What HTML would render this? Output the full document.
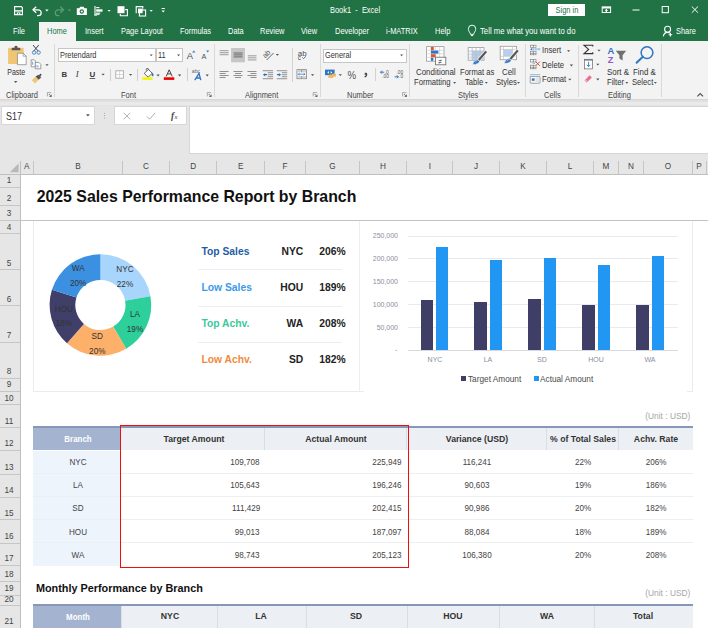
<!DOCTYPE html><html><head><meta charset="utf-8"><style>
html,body{margin:0;padding:0;width:708px;height:628px;overflow:hidden;background:#fff}
body{position:relative;font-family:"Liberation Sans",sans-serif}
.t{position:absolute;white-space:nowrap}
.r{position:absolute}
svg{position:absolute}
</style></head><body>
<div class="r" style="left:0px;top:0px;width:708px;height:41px;background:#217346;"></div>
<div class="r" style="left:39px;top:22px;width:37px;height:19px;background:#f3f3f3;"></div>
<div class="t" style="left:12.60px;top:28.15px;font-size:8.2px;line-height:8.2px;color:#fff;font-weight:normal;transform:scaleX(0.91);transform-origin:0 0;">File</div>
<div class="t" style="left:46.70px;top:28.15px;font-size:8.2px;line-height:8.2px;color:#217346;font-weight:normal;transform:scaleX(0.91);transform-origin:0 0;">Home</div>
<div class="t" style="left:84.80px;top:28.15px;font-size:8.2px;line-height:8.2px;color:#fff;font-weight:normal;transform:scaleX(0.91);transform-origin:0 0;">Insert</div>
<div class="t" style="left:120.80px;top:28.15px;font-size:8.2px;line-height:8.2px;color:#fff;font-weight:normal;transform:scaleX(0.91);transform-origin:0 0;">Page Layout</div>
<div class="t" style="left:179.50px;top:28.15px;font-size:8.2px;line-height:8.2px;color:#fff;font-weight:normal;transform:scaleX(0.91);transform-origin:0 0;">Formulas</div>
<div class="t" style="left:227.60px;top:28.15px;font-size:8.2px;line-height:8.2px;color:#fff;font-weight:normal;transform:scaleX(0.91);transform-origin:0 0;">Data</div>
<div class="t" style="left:260.20px;top:28.15px;font-size:8.2px;line-height:8.2px;color:#fff;font-weight:normal;transform:scaleX(0.91);transform-origin:0 0;">Review</div>
<div class="t" style="left:300.80px;top:28.15px;font-size:8.2px;line-height:8.2px;color:#fff;font-weight:normal;transform:scaleX(0.91);transform-origin:0 0;">View</div>
<div class="t" style="left:334.70px;top:28.15px;font-size:8.2px;line-height:8.2px;color:#fff;font-weight:normal;transform:scaleX(0.91);transform-origin:0 0;">Developer</div>
<div class="t" style="left:385.60px;top:28.15px;font-size:8.2px;line-height:8.2px;color:#fff;font-weight:normal;transform:scaleX(0.91);transform-origin:0 0;">i-MATRIX</div>
<div class="t" style="left:434.60px;top:28.15px;font-size:8.2px;line-height:8.2px;color:#fff;font-weight:normal;transform:scaleX(0.91);transform-origin:0 0;">Help</div>
<div class="t" style="left:479.70px;top:28.15px;font-size:8.2px;line-height:8.2px;color:#fff;font-weight:normal;transform:scaleX(0.945);transform-origin:0 0;">Tell me what you want to do</div>
<div class="t" style="left:675.60px;top:28.35px;font-size:8.2px;line-height:8.2px;color:#fff;font-weight:normal;transform:scaleX(0.91);transform-origin:0 0;">Share</div>
<div class="t" style="left:329.70px;top:7.35px;font-size:8.2px;line-height:8.2px;color:#fff;font-weight:normal;transform:scaleX(0.91);transform-origin:0 0;">Book1&nbsp; -&nbsp; Excel</div>
<div class="r" style="left:548px;top:4px;width:37px;height:12px;background:#fff;"></div>
<div class="t" style="left:566.50px;top:6.95px;font-size:8.2px;line-height:8.2px;color:#217346;font-weight:normal;transform:translateX(-50%) scaleX(0.91);transform-origin:50% 0;">Sign in</div>
<svg style="left:0;top:0" width="708" height="41"><path d="M14.6,6.6 H21.3 L22.4,7.7 V14.6 H14.6 Z" fill="none" stroke="#fff" stroke-width="1.2"/><rect x="14.6" y="10.2" width="7.8" height="1.4" fill="#fff"/><rect x="16.8" y="12.4" width="3.6" height="2.4" fill="#fff"/><rect x="18" y="13.2" width="1.2" height="1" fill="#217346"/><path d="M33.2,9.8 H38.2 A3,2.9 0 0 1 38.2,15.6 H37" fill="none" stroke="#fff" stroke-width="1.3"/><path d="M36.2,6.8 L33,9.8 L36.2,12.8" fill="none" stroke="#fff" stroke-width="1.3"/><path d="M45.2,9.6 H48.6 L46.9,11.5 Z" fill="#fff"/><path d="M63.3,9.8 H58.3 A3,2.9 0 0 0 58.3,15.6 H59.5" fill="none" stroke="#5d9c78" stroke-width="1.3"/><path d="M60.3,6.8 L63.5,9.8 L60.3,12.8" fill="none" stroke="#5d9c78" stroke-width="1.3"/><path d="M67.8,9.6 H71 L69.4,11.4 Z" fill="#5d9c78"/><path d="M76.8,8.3 H79.2 L80.2,6.8 H83.5 L84.5,8.3 H86.9 V14.9 H76.8 Z" fill="#fff"/><circle cx="81.8" cy="11.5" r="2.2" fill="#217346"/><circle cx="81.8" cy="11.5" r="1.1" fill="#fff"/><path d="M95,6 V16" stroke="#fff" stroke-width="1.1"/><rect x="96.2" y="7" width="3.2" height="1.2" fill="#fff"/><rect x="96.2" y="9.3" width="6.3" height="2.4" fill="#fff"/><rect x="96.2" y="12.6" width="4" height="1.2" fill="#fff"/><path d="M95.5,14.6 H99.5 M96.6,13.4 L95.4,14.6 L96.6,15.8" stroke="#fff" stroke-width="0.9" fill="none"/><path d="M107.5,10.1 H110.7 L109.1,11.7 Z" fill="#fff"/><rect x="117.5" y="6.2" width="7" height="7" fill="#fff"/><path d="M125.2,9.6 H127.4 V15.8 H120.3 V13.8" fill="none" stroke="#fff" stroke-width="1.1"/><path d="M136.2,13.3 V6.6 H142.8 V8.5" fill="none" stroke="#fff" stroke-width="1.1"/><rect x="138" y="8.6" width="4.6" height="4.6" fill="#fff"/><rect x="139.4" y="10" width="6.2" height="6" fill="none" stroke="#fff" stroke-width="1.1"/><path d="M149.6,10.1 H152.8 L151.2,11.7 Z" fill="#fff"/><rect x="161.6" y="8" width="3.2" height="1" fill="#fff"/><path d="M161.5,10.6 H164.9 L163.2,12.4 Z" fill="#fff"/><rect x="602.2" y="6.9" width="8.4" height="5.6" fill="none" stroke="#fff" stroke-width="1"/><rect x="602.2" y="6.9" width="8.4" height="1.6" fill="#fff"/><path d="M606.4,8.8 L604.6,10.8 H605.8 V12.4 H607 V10.8 H608.2 Z" fill="#fff"/><rect x="632.5" y="9.5" width="7" height="1" fill="#fff"/><rect x="662.2" y="6.5" width="6.2" height="6.2" fill="none" stroke="#fff" stroke-width="1"/><path d="M691.8,6.5 L698,12.7 M698,6.5 L691.8,12.7" stroke="#fff" stroke-width="1"/><path d="M470.6,34.4 L469.6,32.2 C468.6,30.8 468.4,29.8 468.4,28.8 A3.65,3.65 0 0 1 475.7,28.8 C475.7,29.8 475.5,30.8 474.5,32.2 L473.5,34.4 Z" fill="none" stroke="#fff" stroke-width="0.95"/><path d="M470.9,35.6 H473.2" stroke="#fff" stroke-width="1"/><circle cx="667.6" cy="29.2" r="3" fill="none" stroke="#fff" stroke-width="1.1"/><path d="M663.3,36.4 C663.8,33.6 665.6,32.4 667.6,32.4 C668.6,32.4 669.4,32.7 670.1,33.1" fill="none" stroke="#fff" stroke-width="1.1"/><path d="M670.4,33.1 V36.6 M668.6,34.8 H672.2" stroke="#fff" stroke-width="1.1"/></svg>
<div class="r" style="left:0px;top:41px;width:708px;height:58px;background:#f3f3f3;"></div>
<div class="r" style="left:0px;top:100px;width:708px;height:61px;background:#e6e6e6;"></div>
<div class="r" style="left:0px;top:99px;width:708px;height:1px;background:#d6d6d6;"></div>
<div class="r" style="left:0px;top:100px;width:708px;height:2px;background:#e0e0e0;"></div>
<div class="r" style="left:0px;top:102px;width:708px;height:3px;background:#eaeaea;"></div>
<div class="r" style="left:0px;top:105px;width:708px;height:1px;background:#e3e3e3;"></div>
<div class="r" style="left:57.5px;top:48.3px;width:98px;height:14px;background:#fff;border:1px solid #c6c6c6;box-sizing:border-box;"></div>
<div class="t" style="left:59.80px;top:52.05px;font-size:8.2px;line-height:8.2px;color:#333;font-weight:normal;transform:scaleX(0.9);transform-origin:0 0;">Pretendard</div>
<div class="r" style="left:155.5px;top:48.3px;width:27.2px;height:14px;background:#fff;border:1px solid #c6c6c6;box-sizing:border-box;"></div>
<div class="t" style="left:158.30px;top:52.05px;font-size:8.2px;line-height:8.2px;color:#333;font-weight:normal;transform:scaleX(0.9);transform-origin:0 0;">11</div>
<div class="r" style="left:323px;top:48.5px;width:83.5px;height:14px;background:#fff;border:1px solid #c6c6c6;box-sizing:border-box;"></div>
<div class="t" style="left:325.40px;top:52.05px;font-size:8.2px;line-height:8.2px;color:#333;font-weight:normal;transform:scaleX(0.9);transform-origin:0 0;">General</div>
<div class="t" style="left:415.90px;top:68.06px;font-size:9px;line-height:9px;color:#333;font-weight:normal;transform:scaleX(0.88);transform-origin:0 0;">Conditional</div>
<div class="t" style="left:413.70px;top:78.46px;font-size:9px;line-height:9px;color:#333;font-weight:normal;transform:scaleX(0.85);transform-origin:0 0;">Formatting</div>
<div class="t" style="left:459.70px;top:68.06px;font-size:9px;line-height:9px;color:#333;font-weight:normal;transform:scaleX(0.845);transform-origin:0 0;">Format as</div>
<div class="t" style="left:465.00px;top:78.46px;font-size:9px;line-height:9px;color:#333;font-weight:normal;transform:scaleX(0.85);transform-origin:0 0;">Table</div>
<div class="t" style="left:502.00px;top:68.06px;font-size:9px;line-height:9px;color:#333;font-weight:normal;transform:scaleX(0.88);transform-origin:0 0;">Cell</div>
<div class="t" style="left:496.10px;top:78.46px;font-size:9px;line-height:9px;color:#333;font-weight:normal;transform:scaleX(0.85);transform-origin:0 0;">Styles</div>
<div class="t" style="left:541.80px;top:46.36px;font-size:9px;line-height:9px;color:#333;font-weight:normal;transform:scaleX(0.85);transform-origin:0 0;">Insert</div>
<div class="t" style="left:541.80px;top:61.06px;font-size:9px;line-height:9px;color:#333;font-weight:normal;transform:scaleX(0.85);transform-origin:0 0;">Delete</div>
<div class="t" style="left:541.80px;top:75.46px;font-size:9px;line-height:9px;color:#333;font-weight:normal;transform:scaleX(0.85);transform-origin:0 0;">Format</div>
<div class="t" style="left:606.70px;top:68.06px;font-size:9px;line-height:9px;color:#333;font-weight:normal;transform:scaleX(0.88);transform-origin:0 0;">Sort &amp;</div>
<div class="t" style="left:606.70px;top:78.46px;font-size:9px;line-height:9px;color:#333;font-weight:normal;transform:scaleX(0.85);transform-origin:0 0;">Filter</div>
<div class="t" style="left:633.10px;top:68.06px;font-size:9px;line-height:9px;color:#333;font-weight:normal;transform:scaleX(0.88);transform-origin:0 0;">Find &amp;</div>
<div class="t" style="left:632.10px;top:78.46px;font-size:9px;line-height:9px;color:#333;font-weight:normal;transform:scaleX(0.85);transform-origin:0 0;">Select</div>
<div class="t" style="left:5.80px;top:91.36px;font-size:8.8px;line-height:8.8px;color:#444;font-weight:normal;transform:scaleX(0.85);transform-origin:0 0;">Clipboard</div>
<div class="t" style="left:120.50px;top:91.36px;font-size:8.8px;line-height:8.8px;color:#444;font-weight:normal;transform:scaleX(0.85);transform-origin:0 0;">Font</div>
<div class="t" style="left:245.30px;top:91.36px;font-size:8.8px;line-height:8.8px;color:#444;font-weight:normal;transform:scaleX(0.85);transform-origin:0 0;">Alignment</div>
<div class="t" style="left:346.90px;top:91.36px;font-size:8.8px;line-height:8.8px;color:#444;font-weight:normal;transform:scaleX(0.85);transform-origin:0 0;">Number</div>
<div class="t" style="left:458.00px;top:91.36px;font-size:8.8px;line-height:8.8px;color:#444;font-weight:normal;transform:scaleX(0.85);transform-origin:0 0;">Styles</div>
<div class="t" style="left:543.90px;top:91.36px;font-size:8.8px;line-height:8.8px;color:#444;font-weight:normal;transform:scaleX(0.85);transform-origin:0 0;">Cells</div>
<div class="t" style="left:608.30px;top:91.36px;font-size:8.8px;line-height:8.8px;color:#444;font-weight:normal;transform:scaleX(0.85);transform-origin:0 0;">Editing</div>
<div class="r" style="left:54px;top:44px;width:1px;height:53px;background:#d9d9d9;"></div>
<div class="r" style="left:214px;top:44px;width:1px;height:53px;background:#d9d9d9;"></div>
<div class="r" style="left:320px;top:44px;width:1px;height:53px;background:#d9d9d9;"></div>
<div class="r" style="left:409px;top:44px;width:1px;height:53px;background:#d9d9d9;"></div>
<div class="r" style="left:525px;top:44px;width:1px;height:53px;background:#d9d9d9;"></div>
<div class="r" style="left:661px;top:44px;width:1px;height:53px;background:#d9d9d9;"></div>
<div class="r" style="left:110px;top:68.5px;width:1px;height:12.5px;background:#cfcfcf;"></div>
<div class="r" style="left:137px;top:68.5px;width:1px;height:12.5px;background:#cfcfcf;"></div>
<div class="r" style="left:186.5px;top:68px;width:1px;height:12.5px;background:#cfcfcf;"></div>
<div class="r" style="left:291.5px;top:47.5px;width:1px;height:34.5px;background:#d2d2d2;"></div>
<div class="r" style="left:375.2px;top:68.3px;width:1px;height:13px;background:#d2d2d2;"></div>
<div class="r" style="left:578.3px;top:44.5px;width:1px;height:52px;background:#d9d9d9;"></div>
<svg style="left:0;top:0" width="708" height="100"><rect x="8.1" y="47.8" width="15.6" height="16.2" rx="0.6" fill="#f0c674"/><path d="M11.6,50.3 V48.9 Q11.6,47.7 13,47.7 H14.6 V46.6 Q14.6,45.8 16,45.8 Q17.4,45.8 17.4,46.6 V47.7 H19 Q20.4,47.7 20.4,48.9 V50.3 Z" fill="#555"/><path d="M17.4,53.2 H23.2 L26.2,56.2 V64.7 H17.4 Z" fill="#fff" stroke="#8a8a8a" stroke-width="0.8"/><path d="M23.2,53.2 V56.2 H26.2" fill="none" stroke="#8a8a8a" stroke-width="0.7"/><path d="M13.97,81.10 H17.43 L15.70,82.90 Z" fill="#555"/><path d="M33,45 L38.2,51.2 M38.8,45 L33.6,51.2" stroke="#444" stroke-width="1"/><circle cx="34.1" cy="52.5" r="1.7" fill="none" stroke="#4a86c8" stroke-width="1"/><circle cx="38.6" cy="52.5" r="1.7" fill="none" stroke="#4a86c8" stroke-width="1"/><path d="M31.2,59.8 H34.3 L35.4,60.9 V66.8 H31.2 Z" fill="#fff" stroke="#777" stroke-width="0.7"/><path d="M35.3,62.4 H38.9 L40.8,64.3 V68.8 H35.3 Z" fill="#fff" stroke="#777" stroke-width="0.7"/><path d="M32.7,61.8 V64.8 M37,65 V67.3 M38.3,66.2 V67.3" stroke="#4a86c8" stroke-width="0.8"/><path d="M45.39,64.20 H48.61 L47.00,66.00 Z" fill="#555"/><path d="M31.9,80.3 L35.4,76.6 L38.6,79.8 L35,83.4 Z" fill="#f0c674"/><path d="M35.6,76.6 L38.4,74.7 L41.2,77.5 L38.6,79.8 Z" fill="#555"/><path d="M38.6,75.5 L40.6,73.6 L41.7,74.7 L40.2,76.7 Z" fill="#555"/><text x="61.6" y="77" font-family="Liberation Sans" font-weight="bold" font-size="7.8" fill="#3a3a3a">B</text><text x="75.8" y="77.2" font-family="Liberation Serif" font-style="italic" font-size="8.8" fill="#3a3a3a">I</text><text x="89.4" y="76.8" font-family="Liberation Sans" font-weight="bold" font-size="8" fill="#3a3a3a">U</text><rect x="89.6" y="78" width="5.6" height="0.8" fill="#3a3a3a"/><path d="M101.49,73.70 H104.71 L103.10,75.50 Z" fill="#505050"/><rect x="115.8" y="70.8" width="7.6" height="7.4" fill="#fff" stroke="#a8a8a8" stroke-width="0.9"/><path d="M119.6,70.8 V78.2 M115.8,74.5 H123.4" stroke="#c8c8c8" stroke-width="0.7"/><path d="M128.99,74.00 H132.21 L130.60,75.80 Z" fill="#505050"/><path d="M144.2,73.4 L148.4,69.4 L152.2,73.2 L148.2,77.2 Z" fill="#fff" stroke="#555" stroke-width="0.9" stroke-linejoin="round"/><path d="M146.4,70.6 Q145.6,68.6 147,68.3 Q148.6,68.2 148.9,70.2" fill="none" stroke="#555" stroke-width="0.8"/><path d="M152.4,72.6 Q154.2,74.6 153.4,76 Q152,76.6 151.6,75.2 Q151.4,74 152.4,72.6 Z" fill="#2e75c2"/><rect x="142.3" y="77.3" width="10.2" height="2.6" fill="#f5f500"/><path d="M156.49,74.60 H159.71 L158.10,76.40 Z" fill="#505050"/><path d="M166.2,76.4 L169.2,69.8 L172.2,76.4 M167.4,73.9 H171" fill="none" stroke="#444" stroke-width="1"/><rect x="163.8" y="77.3" width="10.5" height="2.6" fill="#ee0000"/><path d="M177.99,74.60 H181.21 L179.60,76.40 Z" fill="#505050"/><text x="191.8" y="73.2" font-family="Liberation Sans" font-size="4.8" fill="#666" textLength="8.4" lengthAdjust="spacingAndGlyphs">abc</text><path d="M194.8,80.2 L199,73.4 L200.8,80.2 M196.4,78 H200.4" fill="none" stroke="#2e75c2" stroke-width="1.3"/><path d="M205.59,74.60 H208.81 L207.20,76.40 Z" fill="#505050"/><text x="186.8" y="59" font-family="Liberation Sans" font-size="9.4" fill="#505050">A</text><path d="M192.2,52.6 L193.8,50.4 L195.4,52.6 Z" fill="#2e75c2"/><text x="201.6" y="58.8" font-family="Liberation Sans" font-size="7.2" fill="#505050">A</text><path d="M206.2,50.4 L209.2,50.4 L207.7,52.5 Z" fill="#2e75c2"/><text x="7.2" y="74.6" font-family="Liberation Sans" font-size="8.2" textLength="18" lengthAdjust="spacingAndGlyphs" fill="#333">Paste</text><path d="M149.70,54.40 H152.69 L151.20,56.20 Z" fill="#555"/><path d="M177.10,54.40 H180.09 L178.60,56.20 Z" fill="#555"/><path d="M400.11,54.40 H403.10 L401.60,56.20 Z" fill="#555"/><path d="M47.4,96.39999999999999 V92.6 H51.199999999999996" fill="none" stroke="#8a8a8a" stroke-width="0.7"/><path d="M48.8,94.0 L51.3,96.5 M51.3,94.6 V96.5 H49.4" fill="none" stroke="#555" stroke-width="0.8"/><path d="M207.3,96.39999999999999 V92.6 H211.10000000000002" fill="none" stroke="#8a8a8a" stroke-width="0.7"/><path d="M208.70000000000002,94.0 L211.20000000000002,96.5 M211.20000000000002,94.6 V96.5 H209.3" fill="none" stroke="#555" stroke-width="0.8"/><path d="M313.2,96.39999999999999 V92.6 H317.0" fill="none" stroke="#8a8a8a" stroke-width="0.7"/><path d="M314.59999999999997,94.0 L317.09999999999997,96.5 M317.09999999999997,94.6 V96.5 H315.2" fill="none" stroke="#555" stroke-width="0.8"/><path d="M402.6,96.39999999999999 V92.6 H406.40000000000003" fill="none" stroke="#8a8a8a" stroke-width="0.7"/><path d="M404.0,94.0 L406.5,96.5 M406.5,94.6 V96.5 H404.6" fill="none" stroke="#555" stroke-width="0.8"/><path d="M697.4,96.4 L700.2,93.6 L703,96.4" fill="none" stroke="#555" stroke-width="1.3"/><rect x="231.1" y="48" width="13.9" height="14.3" fill="#c6c6c6"/><rect x="219.6" y="50.2" width="9" height="1" fill="#9a9a9a"/><rect x="219.6" y="52.2" width="9" height="1" fill="#9a9a9a"/><rect x="219.6" y="54.2" width="9" height="1" fill="#9a9a9a"/><rect x="233.7" y="52.5" width="8.9" height="1" fill="#6a6a6a"/><rect x="233.7" y="54.4" width="8.9" height="1" fill="#6a6a6a"/><rect x="233.7" y="56.4" width="8.9" height="1" fill="#6a6a6a"/><rect x="247.8" y="55.3" width="8.7" height="1" fill="#9a9a9a"/><rect x="247.8" y="57.3" width="8.7" height="1" fill="#9a9a9a"/><rect x="247.8" y="59.4" width="8.7" height="1" fill="#9a9a9a"/><text x="0" y="0" font-family="Liberation Sans" font-size="7.4" fill="#555" transform="translate(265.2,58.6) rotate(-45)">ab</text><path d="M266.6,60 L273.6,53" stroke="#555" stroke-width="0.9"/><path d="M275.79,54.00 H279.01 L277.40,55.80 Z" fill="#505050"/><rect x="219.6" y="71.1" width="9" height="0.9" fill="#858585"/><rect x="233.50" y="71.1" width="9" height="0.9" fill="#858585"/><rect x="247.50" y="71.1" width="9" height="0.9" fill="#858585"/><rect x="219.6" y="73.1" width="6" height="0.9" fill="#858585"/><rect x="235.00" y="73.1" width="6" height="0.9" fill="#858585"/><rect x="250.50" y="73.1" width="6" height="0.9" fill="#858585"/><rect x="219.6" y="75.1" width="9" height="0.9" fill="#858585"/><rect x="233.50" y="75.1" width="9" height="0.9" fill="#858585"/><rect x="247.50" y="75.1" width="9" height="0.9" fill="#858585"/><rect x="219.6" y="77.1" width="6" height="0.9" fill="#858585"/><rect x="235.00" y="77.1" width="6" height="0.9" fill="#858585"/><rect x="250.50" y="77.1" width="6" height="0.9" fill="#858585"/><rect x="262.70" y="70.3" width="10.4" height="0.9" fill="#858585"/><rect x="267.70" y="72.3" width="5.4" height="0.9" fill="#858585"/><rect x="267.70" y="74.3" width="5.4" height="0.9" fill="#858585"/><rect x="267.70" y="76.3" width="5.4" height="0.9" fill="#858585"/><rect x="262.70" y="78.3" width="10.4" height="0.9" fill="#858585"/><path d="M262.9,74.7 L265.2,72.9 V74.1 H267.0 V75.3 H265.2 V76.5 Z" fill="#2e75c2"/><rect x="276.80" y="70.3" width="10.4" height="0.9" fill="#858585"/><rect x="281.80" y="72.3" width="5.4" height="0.9" fill="#858585"/><rect x="281.80" y="74.3" width="5.4" height="0.9" fill="#858585"/><rect x="281.80" y="76.3" width="5.4" height="0.9" fill="#858585"/><rect x="276.80" y="78.3" width="10.4" height="0.9" fill="#858585"/><path d="M281.1,74.7 L278.8,72.9 V74.1 H277.0 V75.3 H278.8 V76.5 Z" fill="#2e75c2"/><text x="297.8" y="55.6" font-family="Liberation Sans" font-size="8" fill="#505050">ab</text><text x="297.8" y="59.8" font-family="Liberation Sans" font-size="6.4" fill="#505050">c</text><path d="M302.4,57.4 L303.5,58.6 L305.8,56.4" fill="none" stroke="#2e75c2" stroke-width="1"/><rect x="297" y="69.7" width="9.3" height="9" fill="#fff" stroke="#777" stroke-width="0.8"/><rect x="297.4" y="70.1" width="8.5" height="2.2" fill="#d0d0d0"/><rect x="297.4" y="76.1" width="8.5" height="2.2" fill="#d0d0d0"/><path d="M301.6,70 V72.4 M301.6,76 V78.4" stroke="#777" stroke-width="0.6"/><path d="M298.4,74.2 H304.9 M299.6,73.2 L298.4,74.2 L299.6,75.2 M303.7,73.2 L304.9,74.2 L303.7,75.2" fill="none" stroke="#2e75c2" stroke-width="0.8"/><path d="M310.99,74.20 H314.21 L312.60,76.00 Z" fill="#505050"/><rect x="325" y="69.6" width="9.6" height="5.6" fill="#2e75c2"/><path d="M327.3,72.4 L328.9,71 V73.8 Z" fill="#fff"/><path d="M332.3,72.4 L330.7,71 V73.8 Z" fill="#fff"/><ellipse cx="330.8" cy="75.6" rx="2.4" ry="1" fill="#f3b760"/><rect x="328.4" y="75.6" width="4.8" height="2.4" fill="#f3b760"/><ellipse cx="334" cy="74.4" rx="2" ry="0.9" fill="#f3b760"/><rect x="332" y="74.4" width="4" height="2.2" fill="#f3b760"/><path d="M338.69,74.20 H341.91 L340.30,76.00 Z" fill="#505050"/><text x="347.6" y="78.9" font-family="Liberation Sans" font-size="10" fill="#555" textLength="8.6" lengthAdjust="spacingAndGlyphs">%</text><path d="M365.4,73.2 Q366.8,73.2 366.6,74.8 Q366.3,76.4 364.6,77" fill="none" stroke="#444" stroke-width="1.3"/><circle cx="365.4" cy="73.9" r="0.9" fill="#444"/><path d="M380.5,72.2 H384.2 M382,70.7 L380.5,72.2 L382,73.7" fill="none" stroke="#2e75c2" stroke-width="1"/><text x="384.6" y="73.8" font-family="Liberation Sans" font-size="4.8" fill="#555">.0</text><text x="382.2" y="78.2" font-family="Liberation Sans" font-size="4.8" fill="#555">.00</text><text x="396.4" y="73.8" font-family="Liberation Sans" font-size="4.8" fill="#555">.00</text><path d="M394.6,76.8 H398.4 M396.9,75.3 L398.4,76.8 L396.9,78.3" fill="none" stroke="#2e75c2" stroke-width="1"/><text x="399.2" y="78.2" font-family="Liberation Sans" font-size="4.8" fill="#555">.0</text><rect x="426.6" y="46.6" width="17.4" height="14.6" fill="#fff" stroke="#9a9a9a" stroke-width="0.8"/><path d="M430.95,46.6 V61.2" stroke="#c8c8c8" stroke-width="0.6"/><path d="M426.6,50.25 H444" stroke="#c8c8c8" stroke-width="0.6"/><path d="M435.30,46.6 V61.2" stroke="#c8c8c8" stroke-width="0.6"/><path d="M426.6,53.90 H444" stroke="#c8c8c8" stroke-width="0.6"/><path d="M439.65,46.6 V61.2" stroke="#c8c8c8" stroke-width="0.6"/><path d="M426.6,57.55 H444" stroke="#c8c8c8" stroke-width="0.6"/><rect x="431" y="47" width="2.8" height="3.2" fill="#e0562b"/><rect x="431" y="50.6" width="7.4" height="3" fill="#2e75c2"/><rect x="431" y="54.2" width="4.6" height="3" fill="#e0562b"/><rect x="431" y="57.8" width="2.4" height="3" fill="#2e75c2"/><rect x="435.6" y="57.2" width="10.2" height="7.6" fill="#fff" stroke="#666" stroke-width="0.8"/><text x="438.2" y="63.6" font-family="Liberation Sans" font-size="7" fill="#333">&#8800;</text><rect x="468.2" y="47.6" width="15.8" height="12.6" fill="#fff" stroke="#9a9a9a" stroke-width="0.8"/><rect x="472.2" y="50.8" width="11.6" height="9.2" fill="#b7cfea"/><path d="M472.15,47.6 V60.2" stroke="#c8c8c8" stroke-width="0.6"/><path d="M476.10,47.6 V60.2" stroke="#c8c8c8" stroke-width="0.6"/><path d="M480.05,47.6 V60.2" stroke="#c8c8c8" stroke-width="0.6"/><path d="M468.2,50.75 H484" stroke="#c8c8c8" stroke-width="0.6"/><path d="M468.2,53.90 H484" stroke="#c8c8c8" stroke-width="0.6"/><path d="M468.2,57.05 H484" stroke="#c8c8c8" stroke-width="0.6"/><rect x="500.2" y="46.3" width="16.4" height="13.4" fill="#fff" stroke="#9a9a9a" stroke-width="0.8"/><rect x="503.5" y="49.4" width="9" height="6.9" fill="#b7cfea"/><path d="M503.5,46.3 V59.7 M512.5,46.3 V59.7 M500.2,49.4 H516.6 M500.2,56.3 H516.6" stroke="#c0c0c0" stroke-width="0.6"/><path d="M468.2,51.7 H484 M468.2,54.8 H484 M468.2,57.9 H484 M472.2,47.6 V60.2 M476.1,47.6 V60.2 M480.1,47.6 V60.2" stroke="#a8bcd6" stroke-width="0.5"/><path d="M478.6,60.2 L486.2,51.4" stroke="#f3f3f3" stroke-width="3.6"/><path d="M472.6,64.6 Q473.4,60 477.4,59.4 L479.6,61.4 Q478.6,64.4 472.6,64.6 Z" fill="#2e75c2" stroke="#f3f3f3" stroke-width="0.6"/><path d="M475.2,62.2 Q476.2,60.8 477.6,60.6" stroke="#bcd6f0" stroke-width="0.7" fill="none"/><path d="M478.8,60 L486.2,51.4" stroke="#555" stroke-width="2.2"/><path d="M510.20000000000005,59.2 L517.8,50.4" stroke="#f3f3f3" stroke-width="3.6"/><path d="M504.20000000000005,63.599999999999994 Q505.0,59 509.0,58.4 L511.20000000000005,60.4 Q510.20000000000005,63.400000000000006 504.20000000000005,63.599999999999994 Z" fill="#2e75c2" stroke="#f3f3f3" stroke-width="0.6"/><path d="M506.8,61.2 Q507.8,59.8 509.20000000000005,59.6" stroke="#bcd6f0" stroke-width="0.7" fill="none"/><path d="M510.40000000000003,59 L517.8,50.4" stroke="#555" stroke-width="2.2"/><rect x="530.60" y="45.20" width="2.5" height="2.4" fill="#fff" stroke="#7a7a7a" stroke-width="0.6"/><rect x="533.50" y="45.20" width="2.5" height="2.4" fill="#fff" stroke="#7a7a7a" stroke-width="0.6"/><path d="M530.2,49.2 L532.2,47.8 V50.6 Z" fill="#2e75c2"/><rect x="532.6" y="48.2" width="7.6" height="2" fill="#9dc3e6"/><path d="M534.6,48.2 V50.2 M537.2,48.2 V50.2" stroke="#fff" stroke-width="0.4"/><rect x="530.60" y="51.20" width="2.5" height="2.4" fill="#fff" stroke="#7a7a7a" stroke-width="0.6"/><rect x="533.50" y="51.20" width="2.5" height="2.4" fill="#fff" stroke="#7a7a7a" stroke-width="0.6"/><rect x="530.60" y="53.20" width="2.5" height="1.6" fill="#fff" stroke="#7a7a7a" stroke-width="0.6"/><rect x="533.50" y="53.20" width="2.5" height="1.6" fill="#fff" stroke="#7a7a7a" stroke-width="0.6"/><rect x="530.60" y="59.60" width="2.5" height="2.4" fill="#fff" stroke="#7a7a7a" stroke-width="0.6"/><rect x="533.50" y="59.60" width="2.5" height="2.4" fill="#fff" stroke="#7a7a7a" stroke-width="0.6"/><rect x="532.6" y="62.4" width="2.4" height="1.6" fill="#9dc3e6"/><path d="M535.6,61.6 L539.8,65.8 M539.8,61.6 L535.6,65.8" stroke="#e0502b" stroke-width="1"/><rect x="530.60" y="65.20" width="2.5" height="2.4" fill="#fff" stroke="#7a7a7a" stroke-width="0.6"/><rect x="533.50" y="65.20" width="2.5" height="2.4" fill="#fff" stroke="#7a7a7a" stroke-width="0.6"/><rect x="530.60" y="67.20" width="2.5" height="1.6" fill="#fff" stroke="#7a7a7a" stroke-width="0.6"/><rect x="533.50" y="67.20" width="2.5" height="1.6" fill="#fff" stroke="#7a7a7a" stroke-width="0.6"/><rect x="529.8" y="74" width="10.4" height="1.1" fill="#9dc3e6"/><path d="M530.2,76.4 H539.4 Q540,76.4 540,77 V82.6 Q540,83.2 539.4,83.2 H530.8 Q530.2,83.2 530.2,82.6 Z" fill="#fafafa" stroke="#7a7a7a" stroke-width="0.7"/><rect x="531.8" y="78.4" width="2.8" height="2.4" fill="#2e75c2"/><rect x="535.6" y="77.4" width="3.6" height="5" fill="#e4e4e4"/><path d="M566.99,50.20 H570.21 L568.60,52.00 Z" fill="#505050"/><path d="M569.79,64.60 H573.01 L571.40,66.40 Z" fill="#505050"/><path d="M568.19,78.80 H571.41 L569.80,80.60 Z" fill="#505050"/><path d="M592.8,46.6 V45.2 H584 L588.6,49.4 L584,53.6 H592.8 V52.2" fill="none" stroke="#333" stroke-width="1.1"/><path d="M597.39,49.80 H600.61 L599.00,51.60 Z" fill="#505050"/><rect x="584.6" y="59.3" width="8" height="9.6" fill="#fff" stroke="#666" stroke-width="0.7"/><rect x="584.6" y="59.3" width="8" height="1.3" fill="#777"/><path d="M588.6,61.8 V66.4 M586.8,64.8 L588.6,66.6 L590.4,64.8" fill="none" stroke="#2e75c2" stroke-width="0.9"/><path d="M596.19,63.80 H599.41 L597.80,65.60 Z" fill="#505050"/><path d="M584.6,80.6 L589.6,75.2 L591.8,77.4 L586.8,82.4 Z" fill="#e8708a"/><path d="M584.6,80.6 L586,79.2 L588.2,81.4 L586.8,82.4 Z" fill="#f4a6b8"/><path d="M596.19,78.60 H599.41 L597.80,80.40 Z" fill="#505050"/><text x="607.4" y="54.3" font-family="Liberation Sans" font-weight="bold" font-size="9.4" fill="#2e75c2">A</text><text x="607.8" y="63.1" font-family="Liberation Sans" font-weight="bold" font-size="9.2" fill="#9256c8">Z</text><path d="M615.8,50.8 H626.2 L622.6,55.2 V60.4 L619.4,58.6 V55.2 Z" fill="#707070"/><circle cx="647" cy="52.6" r="5.9" fill="none" stroke="#2e75c2" stroke-width="1.5"/><path d="M642.8,56.8 L636.6,62.8" stroke="#2e75c2" stroke-width="2" stroke-linecap="round"/><path d="M453.11,82.00 H456.10 L454.60,83.80 Z" fill="#555"/><path d="M484.81,82.00 H487.80 L486.30,83.80 Z" fill="#555"/><path d="M517.00,82.00 H520.00 L518.50,83.80 Z" fill="#555"/><path d="M625.30,82.00 H628.29 L626.80,83.80 Z" fill="#555"/><path d="M653.90,82.00 H656.89 L655.40,83.80 Z" fill="#555"/></svg>
<div class="r" style="left:1px;top:106px;width:94px;height:19px;background:#fff;border:1px solid #d6d6d6;box-sizing:border-box;"></div>
<div class="t" style="left:5.60px;top:110.99px;font-size:10.8px;line-height:10.8px;color:#333;font-weight:normal;transform:scaleX(0.83);transform-origin:0 0;">S17</div>
<div class="r" style="left:114px;top:106px;width:73px;height:19px;background:#fff;border:1px solid #d6d6d6;box-sizing:border-box;"></div>
<div class="r" style="left:189px;top:106px;width:519px;height:48px;background:#fff;border:1px solid #d6d6d6;border-right:none;box-sizing:border-box;"></div>
<div class="r" style="left:0px;top:161px;width:708px;height:13px;background:#e6e6e6;"></div>
<div class="r" style="left:0px;top:174px;width:708px;height:1px;background:#bfbfbf;"></div>
<div class="r" style="left:33px;top:161px;width:1px;height:13px;background:#c6c6c6"></div>
<div class="t" style="left:26.70px;top:163.25px;font-size:8.2px;line-height:8.2px;color:#444;font-weight:normal;transform:translateX(-50%) scaleX(1.0);transform-origin:0 0;">A</div>
<div class="r" style="left:122px;top:161px;width:1px;height:13px;background:#c6c6c6"></div>
<div class="t" style="left:77.90px;top:163.25px;font-size:8.2px;line-height:8.2px;color:#444;font-weight:normal;transform:translateX(-50%) scaleX(1.0);transform-origin:0 0;">B</div>
<div class="r" style="left:169px;top:161px;width:1px;height:13px;background:#c6c6c6"></div>
<div class="t" style="left:146.00px;top:163.25px;font-size:8.2px;line-height:8.2px;color:#444;font-weight:normal;transform:translateX(-50%) scaleX(1.0);transform-origin:0 0;">C</div>
<div class="r" style="left:216px;top:161px;width:1px;height:13px;background:#c6c6c6"></div>
<div class="t" style="left:193.20px;top:163.25px;font-size:8.2px;line-height:8.2px;color:#444;font-weight:normal;transform:translateX(-50%) scaleX(1.0);transform-origin:0 0;">D</div>
<div class="r" style="left:264px;top:161px;width:1px;height:13px;background:#c6c6c6"></div>
<div class="t" style="left:240.70px;top:163.25px;font-size:8.2px;line-height:8.2px;color:#444;font-weight:normal;transform:translateX(-50%) scaleX(1.0);transform-origin:0 0;">E</div>
<div class="r" style="left:305px;top:161px;width:1px;height:13px;background:#c6c6c6"></div>
<div class="t" style="left:285.10px;top:163.25px;font-size:8.2px;line-height:8.2px;color:#444;font-weight:normal;transform:translateX(-50%) scaleX(1.0);transform-origin:0 0;">F</div>
<div class="r" style="left:359px;top:161px;width:1px;height:13px;background:#c6c6c6"></div>
<div class="t" style="left:332.45px;top:163.25px;font-size:8.2px;line-height:8.2px;color:#444;font-weight:normal;transform:translateX(-50%) scaleX(1.0);transform-origin:0 0;">G</div>
<div class="r" style="left:406px;top:161px;width:1px;height:13px;background:#c6c6c6"></div>
<div class="t" style="left:383.05px;top:163.25px;font-size:8.2px;line-height:8.2px;color:#444;font-weight:normal;transform:translateX(-50%) scaleX(1.0);transform-origin:0 0;">H</div>
<div class="r" style="left:452px;top:161px;width:1px;height:13px;background:#c6c6c6"></div>
<div class="t" style="left:429.85px;top:163.25px;font-size:8.2px;line-height:8.2px;color:#444;font-weight:normal;transform:translateX(-50%) scaleX(1.0);transform-origin:0 0;">I</div>
<div class="r" style="left:499px;top:161px;width:1px;height:13px;background:#c6c6c6"></div>
<div class="t" style="left:476.10px;top:163.25px;font-size:8.2px;line-height:8.2px;color:#444;font-weight:normal;transform:translateX(-50%) scaleX(1.0);transform-origin:0 0;">J</div>
<div class="r" style="left:546px;top:161px;width:1px;height:13px;background:#c6c6c6"></div>
<div class="t" style="left:523.00px;top:163.25px;font-size:8.2px;line-height:8.2px;color:#444;font-weight:normal;transform:translateX(-50%) scaleX(1.0);transform-origin:0 0;">K</div>
<div class="r" style="left:593px;top:161px;width:1px;height:13px;background:#c6c6c6"></div>
<div class="t" style="left:570.15px;top:163.25px;font-size:8.2px;line-height:8.2px;color:#444;font-weight:normal;transform:translateX(-50%) scaleX(1.0);transform-origin:0 0;">L</div>
<div class="r" style="left:618px;top:161px;width:1px;height:13px;background:#c6c6c6"></div>
<div class="t" style="left:605.90px;top:163.25px;font-size:8.2px;line-height:8.2px;color:#444;font-weight:normal;transform:translateX(-50%) scaleX(1.0);transform-origin:0 0;">M</div>
<div class="r" style="left:643px;top:161px;width:1px;height:13px;background:#c6c6c6"></div>
<div class="t" style="left:630.85px;top:163.25px;font-size:8.2px;line-height:8.2px;color:#444;font-weight:normal;transform:translateX(-50%) scaleX(1.0);transform-origin:0 0;">N</div>
<div class="r" style="left:692px;top:161px;width:1px;height:13px;background:#c6c6c6"></div>
<div class="t" style="left:668.05px;top:163.25px;font-size:8.2px;line-height:8.2px;color:#444;font-weight:normal;transform:translateX(-50%) scaleX(1.0);transform-origin:0 0;">O</div>
<div class="r" style="left:706px;top:161px;width:1px;height:13px;background:#c6c6c6"></div>
<div class="t" style="left:699.00px;top:163.25px;font-size:8.2px;line-height:8.2px;color:#444;font-weight:normal;transform:translateX(-50%) scaleX(1.0);transform-origin:0 0;">P</div>
<div class="r" style="left:0px;top:175px;width:20px;height:453px;background:#e6e6e6;"></div>
<div class="r" style="left:20px;top:161px;width:1px;height:467px;background:#bfbfbf;"></div>
<div class="r" style="left:0;top:186.6px;width:20px;height:1px;background:#c6c6c6"></div>
<div class="t" style="left:9.00px;top:176.85px;font-size:8.2px;line-height:8.2px;color:#444;font-weight:normal;transform:translateX(-50%) scaleX(1.0);transform-origin:0 0;">1</div>
<div class="r" style="left:0;top:205.0px;width:20px;height:1px;background:#c6c6c6"></div>
<div class="t" style="left:9.00px;top:195.25px;font-size:8.2px;line-height:8.2px;color:#444;font-weight:normal;transform:translateX(-50%) scaleX(1.0);transform-origin:0 0;">2</div>
<div class="r" style="left:0;top:220.0px;width:20px;height:1px;background:#c6c6c6"></div>
<div class="t" style="left:9.00px;top:210.25px;font-size:8.2px;line-height:8.2px;color:#444;font-weight:normal;transform:translateX(-50%) scaleX(1.0);transform-origin:0 0;">3</div>
<div class="r" style="left:0;top:233.4px;width:20px;height:1px;background:#c6c6c6"></div>
<div class="t" style="left:9.00px;top:223.65px;font-size:8.2px;line-height:8.2px;color:#444;font-weight:normal;transform:translateX(-50%) scaleX(1.0);transform-origin:0 0;">4</div>
<div class="r" style="left:0;top:269.3px;width:20px;height:1px;background:#c6c6c6"></div>
<div class="t" style="left:9.00px;top:259.55px;font-size:8.2px;line-height:8.2px;color:#444;font-weight:normal;transform:translateX(-50%) scaleX(1.0);transform-origin:0 0;">5</div>
<div class="r" style="left:0;top:305.3px;width:20px;height:1px;background:#c6c6c6"></div>
<div class="t" style="left:9.00px;top:295.55px;font-size:8.2px;line-height:8.2px;color:#444;font-weight:normal;transform:translateX(-50%) scaleX(1.0);transform-origin:0 0;">6</div>
<div class="r" style="left:0;top:341.6px;width:20px;height:1px;background:#c6c6c6"></div>
<div class="t" style="left:9.00px;top:331.85px;font-size:8.2px;line-height:8.2px;color:#444;font-weight:normal;transform:translateX(-50%) scaleX(1.0);transform-origin:0 0;">7</div>
<div class="r" style="left:0;top:377.8px;width:20px;height:1px;background:#c6c6c6"></div>
<div class="t" style="left:9.00px;top:368.05px;font-size:8.2px;line-height:8.2px;color:#444;font-weight:normal;transform:translateX(-50%) scaleX(1.0);transform-origin:0 0;">8</div>
<div class="r" style="left:0;top:391.0px;width:20px;height:1px;background:#c6c6c6"></div>
<div class="t" style="left:9.00px;top:381.25px;font-size:8.2px;line-height:8.2px;color:#444;font-weight:normal;transform:translateX(-50%) scaleX(1.0);transform-origin:0 0;">9</div>
<div class="r" style="left:0;top:404.4px;width:20px;height:1px;background:#c6c6c6"></div>
<div class="t" style="left:9.00px;top:394.65px;font-size:8.2px;line-height:8.2px;color:#444;font-weight:normal;transform:translateX(-50%) scaleX(1.0);transform-origin:0 0;">10</div>
<div class="r" style="left:0;top:427.3px;width:20px;height:1px;background:#c6c6c6"></div>
<div class="t" style="left:9.00px;top:417.55px;font-size:8.2px;line-height:8.2px;color:#444;font-weight:normal;transform:translateX(-50%) scaleX(1.0);transform-origin:0 0;">11</div>
<div class="r" style="left:0;top:450.2px;width:20px;height:1px;background:#c6c6c6"></div>
<div class="t" style="left:9.00px;top:440.45px;font-size:8.2px;line-height:8.2px;color:#444;font-weight:normal;transform:translateX(-50%) scaleX(1.0);transform-origin:0 0;">12</div>
<div class="r" style="left:0;top:473.5px;width:20px;height:1px;background:#c6c6c6"></div>
<div class="t" style="left:9.00px;top:463.75px;font-size:8.2px;line-height:8.2px;color:#444;font-weight:normal;transform:translateX(-50%) scaleX(1.0);transform-origin:0 0;">13</div>
<div class="r" style="left:0;top:496.5px;width:20px;height:1px;background:#c6c6c6"></div>
<div class="t" style="left:9.00px;top:486.75px;font-size:8.2px;line-height:8.2px;color:#444;font-weight:normal;transform:translateX(-50%) scaleX(1.0);transform-origin:0 0;">14</div>
<div class="r" style="left:0;top:519.4px;width:20px;height:1px;background:#c6c6c6"></div>
<div class="t" style="left:9.00px;top:509.65px;font-size:8.2px;line-height:8.2px;color:#444;font-weight:normal;transform:translateX(-50%) scaleX(1.0);transform-origin:0 0;">15</div>
<div class="r" style="left:0;top:542.5px;width:20px;height:1px;background:#c6c6c6"></div>
<div class="t" style="left:9.00px;top:532.75px;font-size:8.2px;line-height:8.2px;color:#444;font-weight:normal;transform:translateX(-50%) scaleX(1.0);transform-origin:0 0;">16</div>
<div class="r" style="left:0;top:565.2px;width:20px;height:1px;background:#c6c6c6"></div>
<div class="t" style="left:9.00px;top:555.45px;font-size:8.2px;line-height:8.2px;color:#444;font-weight:normal;transform:translateX(-50%) scaleX(1.0);transform-origin:0 0;">17</div>
<div class="r" style="left:0;top:580.6px;width:20px;height:1px;background:#c6c6c6"></div>
<div class="t" style="left:9.00px;top:570.85px;font-size:8.2px;line-height:8.2px;color:#444;font-weight:normal;transform:translateX(-50%) scaleX(1.0);transform-origin:0 0;">18</div>
<div class="r" style="left:0;top:595.2px;width:20px;height:1px;background:#c6c6c6"></div>
<div class="t" style="left:9.00px;top:585.45px;font-size:8.2px;line-height:8.2px;color:#444;font-weight:normal;transform:translateX(-50%) scaleX(1.0);transform-origin:0 0;">19</div>
<div class="r" style="left:0;top:605.3px;width:20px;height:1px;background:#c6c6c6"></div>
<div class="t" style="left:9.00px;top:595.55px;font-size:8.2px;line-height:8.2px;color:#444;font-weight:normal;transform:translateX(-50%) scaleX(1.0);transform-origin:0 0;">20</div>
<div class="r" style="left:0;top:640.0px;width:20px;height:1px;background:#c6c6c6"></div>
<div class="t" style="left:9.00px;top:618.25px;font-size:8.2px;line-height:8.2px;color:#444;font-weight:normal;transform:translateX(-50%) scaleX(1.0);transform-origin:0 0;">21</div>
<svg style="left:0;top:0" width="708" height="180"><path d="M86,114.2 H89.8 L87.9,116.4 Z" fill="#555"/><circle cx="104.6" cy="113.2" r="0.55" fill="#999"/><circle cx="104.6" cy="115.6" r="0.55" fill="#999"/><circle cx="104.6" cy="118" r="0.55" fill="#999"/><path d="M123.6,112.8 L130.2,119.4 M130.2,112.8 L123.6,119.4" stroke="#a6a6a6" stroke-width="0.9"/><path d="M146.8,116.4 L149.6,119.2 L155,113" fill="none" stroke="#a6a6a6" stroke-width="0.9"/><text x="171" y="118.6" font-family="Liberation Serif" font-style="italic" font-weight="bold" font-size="9.4" fill="#444">f</text><text x="174.6" y="119.4" font-family="Liberation Serif" font-style="italic" font-size="6.6" fill="#444">x</text><path d="M9.8,172.2 H18.6 V163.4 Z" fill="#b8b8b8"/></svg>
<div class="r" style="left:21px;top:175px;width:687px;height:453px;background:#fff;"></div>
<div class="r" style="left:21px;top:219.5px;width:687px;height:1.5px;background:#c3c3c3;"></div>
<div class="t" style="left:36.70px;top:188.56px;font-size:15.85px;line-height:15.85px;color:#111;font-weight:bold;">2025 Sales Performance Report by Branch</div>
<div class="r" style="left:33px;top:221px;width:1px;height:170px;background:#e8ecf2;"></div>
<div class="r" style="left:33px;top:390.5px;width:331px;height:1px;background:#e8ecf2;"></div>
<div class="r" style="left:358.5px;top:221px;width:1px;height:170px;background:#eceef2;"></div>
<div class="r" style="left:692px;top:221px;width:1px;height:170px;background:#e8ecf2;"></div>
<div class="r" style="left:687px;top:390.5px;width:6px;height:1px;background:#e8ecf2;"></div>
<svg style="left:0;top:0" width="708" height="628"><path d="M100.40,254.20 A50.8,50.8 0 0 1 150.43,296.17 L125.12,300.64 A25.1,25.1 0 0 0 100.40,279.90 Z" fill="#a8d5fb"/><path d="M150.43,296.17 A50.8,50.8 0 0 1 126.20,348.76 L113.15,326.62 A25.1,25.1 0 0 0 125.12,300.64 Z" fill="#2dcf9b"/><path d="M126.20,348.76 A50.8,50.8 0 0 1 66.98,343.26 L83.89,323.90 A25.1,25.1 0 0 0 113.15,326.62 Z" fill="#fcb06a"/><path d="M66.98,343.26 A50.8,50.8 0 0 1 51.92,289.83 L76.45,297.50 A25.1,25.1 0 0 0 83.89,323.90 Z" fill="#3f3f6a"/><path d="M51.92,289.83 A50.8,50.8 0 0 1 100.40,254.20 L100.40,279.90 A25.1,25.1 0 0 0 76.45,297.50 Z" fill="#3c90e2"/></svg>
<div class="t" style="left:125.00px;top:265.55px;font-size:8.2px;line-height:8.2px;color:#333;font-weight:normal;transform:translateX(-50%) scaleX(1.0);transform-origin:0 0;">NYC</div>
<div class="t" style="left:125.00px;top:280.85px;font-size:8.2px;line-height:8.2px;color:#333;font-weight:normal;transform:translateX(-50%) scaleX(1.0);transform-origin:0 0;">22%</div>
<div class="t" style="left:135.00px;top:310.85px;font-size:8.2px;line-height:8.2px;color:#333;font-weight:normal;transform:translateX(-50%) scaleX(1.0);transform-origin:0 0;">LA</div>
<div class="t" style="left:135.00px;top:325.65px;font-size:8.2px;line-height:8.2px;color:#333;font-weight:normal;transform:translateX(-50%) scaleX(1.0);transform-origin:0 0;">19%</div>
<div class="t" style="left:97.30px;top:333.35px;font-size:8.2px;line-height:8.2px;color:#333;font-weight:normal;transform:translateX(-50%) scaleX(1.0);transform-origin:0 0;">SD</div>
<div class="t" style="left:97.30px;top:348.25px;font-size:8.2px;line-height:8.2px;color:#333;font-weight:normal;transform:translateX(-50%) scaleX(1.0);transform-origin:0 0;">20%</div>
<div class="t" style="left:63.90px;top:305.65px;font-size:8.2px;line-height:8.2px;color:#333;font-weight:normal;transform:translateX(-50%) scaleX(1.0);transform-origin:0 0;">HOU</div>
<div class="t" style="left:63.90px;top:320.35px;font-size:8.2px;line-height:8.2px;color:#333;font-weight:normal;transform:translateX(-50%) scaleX(1.0);transform-origin:0 0;">18%</div>
<div class="t" style="left:78.20px;top:264.85px;font-size:8.2px;line-height:8.2px;color:#333;font-weight:normal;transform:translateX(-50%) scaleX(1.0);transform-origin:0 0;">WA</div>
<div class="t" style="left:78.20px;top:279.95px;font-size:8.2px;line-height:8.2px;color:#333;font-weight:normal;transform:translateX(-50%) scaleX(1.0);transform-origin:0 0;">20%</div>
<div class="t" style="left:201.50px;top:246.64px;font-size:10.3px;line-height:10.3px;color:#1f5ca6;font-weight:bold;">Top Sales</div>
<div class="t" style="right:404.80px;top:246.64px;font-size:10.3px;line-height:10.3px;color:#222;font-weight:bold;">NYC</div>
<div class="t" style="right:362.40px;top:246.64px;font-size:10.3px;line-height:10.3px;color:#222;font-weight:bold;">206%</div>
<div class="t" style="left:201.50px;top:282.94px;font-size:10.3px;line-height:10.3px;color:#3c9ae8;font-weight:bold;">Low Sales</div>
<div class="t" style="right:404.80px;top:282.94px;font-size:10.3px;line-height:10.3px;color:#222;font-weight:bold;">HOU</div>
<div class="t" style="right:362.40px;top:282.94px;font-size:10.3px;line-height:10.3px;color:#222;font-weight:bold;">189%</div>
<div class="t" style="left:201.50px;top:318.84px;font-size:10.3px;line-height:10.3px;color:#3cc89c;font-weight:bold;">Top Achv.</div>
<div class="t" style="right:404.80px;top:318.84px;font-size:10.3px;line-height:10.3px;color:#222;font-weight:bold;">WA</div>
<div class="t" style="right:362.40px;top:318.84px;font-size:10.3px;line-height:10.3px;color:#222;font-weight:bold;">208%</div>
<div class="t" style="left:201.50px;top:355.44px;font-size:10.3px;line-height:10.3px;color:#f08a40;font-weight:bold;">Low Achv.</div>
<div class="t" style="right:404.80px;top:355.44px;font-size:10.3px;line-height:10.3px;color:#222;font-weight:bold;">SD</div>
<div class="t" style="right:362.40px;top:355.44px;font-size:10.3px;line-height:10.3px;color:#222;font-weight:bold;">182%</div>
<div class="r" style="left:198px;top:269px;width:144px;height:1px;background:#ebedf0;"></div>
<div class="r" style="left:198px;top:305.5px;width:144px;height:1px;background:#ebedf0;"></div>
<div class="r" style="left:198px;top:342px;width:144px;height:1px;background:#ebedf0;"></div>
<div class="r" style="left:407.8px;top:349.5px;width:269.8px;height:1px;background:#d8d8e0;"></div>
<div class="t" style="right:310.50px;top:346.33px;font-size:7.2px;line-height:7.2px;color:#8a8d9c;font-weight:normal;transform:scaleX(0.97);transform-origin:100% 0;">-</div>
<div class="r" style="left:407.8px;top:326.5px;width:269.8px;height:1px;background:#e9e9f1;"></div>
<div class="t" style="right:309.90px;top:323.53px;font-size:7.2px;line-height:7.2px;color:#8a8d9c;font-weight:normal;transform:scaleX(0.97);transform-origin:100% 0;">50,000</div>
<div class="r" style="left:407.8px;top:304.0px;width:269.8px;height:1px;background:#e9e9f1;"></div>
<div class="t" style="right:309.90px;top:300.73px;font-size:7.2px;line-height:7.2px;color:#8a8d9c;font-weight:normal;transform:scaleX(0.97);transform-origin:100% 0;">100,000</div>
<div class="r" style="left:407.8px;top:281.0px;width:269.8px;height:1px;background:#e9e9f1;"></div>
<div class="t" style="right:309.90px;top:277.93px;font-size:7.2px;line-height:7.2px;color:#8a8d9c;font-weight:normal;transform:scaleX(0.97);transform-origin:100% 0;">150,000</div>
<div class="r" style="left:407.8px;top:258.0px;width:269.8px;height:1px;background:#e9e9f1;"></div>
<div class="t" style="right:309.90px;top:255.13px;font-size:7.2px;line-height:7.2px;color:#8a8d9c;font-weight:normal;transform:scaleX(0.97);transform-origin:100% 0;">200,000</div>
<div class="r" style="left:407.8px;top:235.5px;width:269.8px;height:1px;background:#e9e9f1;"></div>
<div class="t" style="right:309.90px;top:232.33px;font-size:7.2px;line-height:7.2px;color:#8a8d9c;font-weight:normal;transform:scaleX(0.97);transform-origin:100% 0;">250,000</div>
<div class="r" style="left:420.5px;top:299.9px;width:12.5px;height:50.0px;background:#3e3e66"></div>
<div class="r" style="left:436.3px;top:246.9px;width:11.7px;height:103.0px;background:#2196f3"></div>
<div class="t" style="left:434.50px;top:356.43px;font-size:7.4px;line-height:7.4px;color:#8a8d9c;font-weight:normal;transform:translateX(-50%) scaleX(0.95);transform-origin:50% 0;">NYC</div>
<div class="r" style="left:474.4px;top:301.7px;width:12.5px;height:48.2px;background:#3e3e66"></div>
<div class="r" style="left:490.2px;top:260.4px;width:11.7px;height:89.5px;background:#2196f3"></div>
<div class="t" style="left:488.40px;top:356.43px;font-size:7.4px;line-height:7.4px;color:#8a8d9c;font-weight:normal;transform:translateX(-50%) scaleX(0.95);transform-origin:50% 0;">LA</div>
<div class="r" style="left:528.3px;top:299.1px;width:12.5px;height:50.8px;background:#3e3e66"></div>
<div class="r" style="left:544.1px;top:257.6px;width:11.7px;height:92.3px;background:#2196f3"></div>
<div class="t" style="left:542.30px;top:356.43px;font-size:7.4px;line-height:7.4px;color:#8a8d9c;font-weight:normal;transform:translateX(-50%) scaleX(0.95);transform-origin:50% 0;">SD</div>
<div class="r" style="left:582.2px;top:304.8px;width:12.5px;height:45.1px;background:#3e3e66"></div>
<div class="r" style="left:598.0px;top:264.6px;width:11.7px;height:85.3px;background:#2196f3"></div>
<div class="t" style="left:596.20px;top:356.43px;font-size:7.4px;line-height:7.4px;color:#8a8d9c;font-weight:normal;transform:translateX(-50%) scaleX(0.95);transform-origin:50% 0;">HOU</div>
<div class="r" style="left:636.1px;top:304.9px;width:12.5px;height:45.0px;background:#3e3e66"></div>
<div class="r" style="left:651.9px;top:256.4px;width:11.7px;height:93.5px;background:#2196f3"></div>
<div class="t" style="left:650.10px;top:356.43px;font-size:7.4px;line-height:7.4px;color:#8a8d9c;font-weight:normal;transform:translateX(-50%) scaleX(0.95);transform-origin:50% 0;">WA</div>
<div class="r" style="left:461.2px;top:376px;width:5px;height:5px;background:#3e3e66;"></div>
<div class="t" style="left:468.00px;top:374.55px;font-size:8.6px;line-height:8.6px;color:#4a4a4a;font-weight:normal;transform:scaleX(0.96);transform-origin:0 0;">Target Amount</div>
<div class="r" style="left:534px;top:376px;width:4.5px;height:5px;background:#2196f3;"></div>
<div class="t" style="left:540.30px;top:374.55px;font-size:8.6px;line-height:8.6px;color:#4a4a4a;font-weight:normal;transform:scaleX(0.96);transform-origin:0 0;">Actual Amount</div>
<div class="t" style="right:17.60px;top:412.15px;font-size:8.4px;line-height:8.4px;color:#a6a6a6;font-weight:normal;">(Unit : USD)</div>
<div class="r" style="left:33px;top:426px;width:660px;height:2px;background:#8797b8;"></div>
<div class="r" style="left:33px;top:428px;width:88px;height:22px;background:#a3b3d0;"></div>
<div class="r" style="left:121px;top:428px;width:572px;height:22px;background:#eceff4;"></div>
<div class="r" style="left:264px;top:428px;width:1px;height:22px;background:#d8dde6;"></div>
<div class="r" style="left:406px;top:428px;width:1px;height:22px;background:#d8dde6;"></div>
<div class="r" style="left:546px;top:428px;width:1px;height:22px;background:#d8dde6;"></div>
<div class="r" style="left:618px;top:428px;width:1px;height:22px;background:#d8dde6;"></div>
<div class="t" style="left:77.50px;top:435.16px;font-size:8.8px;line-height:8.8px;color:#fff;font-weight:bold;transform:translateX(-50%) scaleX(0.9);transform-origin:50% 0;">Branch</div>
<div class="t" style="left:193.50px;top:434.92px;font-size:9.3px;line-height:9.3px;color:#333;font-weight:bold;transform:translateX(-50%) scaleX(0.935);transform-origin:50% 0;">Target Amount</div>
<div class="t" style="left:335.70px;top:434.92px;font-size:9.3px;line-height:9.3px;color:#333;font-weight:bold;transform:translateX(-50%) scaleX(0.935);transform-origin:50% 0;">Actual Amount</div>
<div class="t" style="left:476.70px;top:434.92px;font-size:9.3px;line-height:9.3px;color:#333;font-weight:bold;transform:translateX(-50%) scaleX(0.935);transform-origin:50% 0;">Variance (USD)</div>
<div class="t" style="left:582.50px;top:434.92px;font-size:9.3px;line-height:9.3px;color:#333;font-weight:bold;transform:translateX(-50%) scaleX(0.935);transform-origin:50% 0;">% of Total Sales</div>
<div class="t" style="left:655.50px;top:434.92px;font-size:9.3px;line-height:9.3px;color:#333;font-weight:bold;transform:translateX(-50%) scaleX(0.935);transform-origin:50% 0;">Achv. Rate</div>
<div class="r" style="left:33px;top:451px;width:88px;height:22px;background:#eef4fc;"></div>
<div class="t" style="left:77.50px;top:458.31px;font-size:9px;line-height:9px;color:#444;font-weight:normal;transform:translateX(-50%) scaleX(0.9);transform-origin:50% 0;">NYC</div>
<div class="t" style="right:448.00px;top:458.31px;font-size:9px;line-height:9px;color:#444;font-weight:normal;transform:scaleX(0.9);transform-origin:100% 0;">109,708</div>
<div class="t" style="right:306.00px;top:458.31px;font-size:9px;line-height:9px;color:#444;font-weight:normal;transform:scaleX(0.9);transform-origin:100% 0;">225,949</div>
<div class="t" style="left:477.40px;top:458.31px;font-size:9px;line-height:9px;color:#444;font-weight:normal;transform:translateX(-50%) scaleX(0.9);transform-origin:50% 0;">116,241</div>
<div class="t" style="left:582.50px;top:458.31px;font-size:9px;line-height:9px;color:#444;font-weight:normal;transform:translateX(-50%) scaleX(0.9);transform-origin:50% 0;">22%</div>
<div class="t" style="left:655.50px;top:458.31px;font-size:9px;line-height:9px;color:#444;font-weight:normal;transform:translateX(-50%) scaleX(0.9);transform-origin:50% 0;">206%</div>
<div class="r" style="left:33px;top:473px;width:88px;height:23px;background:#eef4fc;"></div>
<div class="r" style="left:33px;top:473px;width:660px;height:1px;background:#eceef1;"></div>
<div class="t" style="left:77.50px;top:481.41px;font-size:9px;line-height:9px;color:#444;font-weight:normal;transform:translateX(-50%) scaleX(0.9);transform-origin:50% 0;">LA</div>
<div class="t" style="right:448.00px;top:481.41px;font-size:9px;line-height:9px;color:#444;font-weight:normal;transform:scaleX(0.9);transform-origin:100% 0;">105,643</div>
<div class="t" style="right:306.00px;top:481.41px;font-size:9px;line-height:9px;color:#444;font-weight:normal;transform:scaleX(0.9);transform-origin:100% 0;">196,246</div>
<div class="t" style="left:477.40px;top:481.41px;font-size:9px;line-height:9px;color:#444;font-weight:normal;transform:translateX(-50%) scaleX(0.9);transform-origin:50% 0;">90,603</div>
<div class="t" style="left:582.50px;top:481.41px;font-size:9px;line-height:9px;color:#444;font-weight:normal;transform:translateX(-50%) scaleX(0.9);transform-origin:50% 0;">19%</div>
<div class="t" style="left:655.50px;top:481.41px;font-size:9px;line-height:9px;color:#444;font-weight:normal;transform:translateX(-50%) scaleX(0.9);transform-origin:50% 0;">186%</div>
<div class="r" style="left:33px;top:496px;width:88px;height:23px;background:#eef4fc;"></div>
<div class="r" style="left:33px;top:496px;width:660px;height:1px;background:#eceef1;"></div>
<div class="t" style="left:77.50px;top:504.46px;font-size:9px;line-height:9px;color:#444;font-weight:normal;transform:translateX(-50%) scaleX(0.9);transform-origin:50% 0;">SD</div>
<div class="t" style="right:448.00px;top:504.46px;font-size:9px;line-height:9px;color:#444;font-weight:normal;transform:scaleX(0.9);transform-origin:100% 0;">111,429</div>
<div class="t" style="right:306.00px;top:504.46px;font-size:9px;line-height:9px;color:#444;font-weight:normal;transform:scaleX(0.9);transform-origin:100% 0;">202,415</div>
<div class="t" style="left:477.40px;top:504.46px;font-size:9px;line-height:9px;color:#444;font-weight:normal;transform:translateX(-50%) scaleX(0.9);transform-origin:50% 0;">90,986</div>
<div class="t" style="left:582.50px;top:504.46px;font-size:9px;line-height:9px;color:#444;font-weight:normal;transform:translateX(-50%) scaleX(0.9);transform-origin:50% 0;">20%</div>
<div class="t" style="left:655.50px;top:504.46px;font-size:9px;line-height:9px;color:#444;font-weight:normal;transform:translateX(-50%) scaleX(0.9);transform-origin:50% 0;">182%</div>
<div class="r" style="left:33px;top:519px;width:88px;height:23px;background:#eef4fc;"></div>
<div class="r" style="left:33px;top:519px;width:660px;height:1px;background:#eceef1;"></div>
<div class="t" style="left:77.50px;top:527.51px;font-size:9px;line-height:9px;color:#444;font-weight:normal;transform:translateX(-50%) scaleX(0.9);transform-origin:50% 0;">HOU</div>
<div class="t" style="right:448.00px;top:527.51px;font-size:9px;line-height:9px;color:#444;font-weight:normal;transform:scaleX(0.9);transform-origin:100% 0;">99,013</div>
<div class="t" style="right:306.00px;top:527.51px;font-size:9px;line-height:9px;color:#444;font-weight:normal;transform:scaleX(0.9);transform-origin:100% 0;">187,097</div>
<div class="t" style="left:477.40px;top:527.51px;font-size:9px;line-height:9px;color:#444;font-weight:normal;transform:translateX(-50%) scaleX(0.9);transform-origin:50% 0;">88,084</div>
<div class="t" style="left:582.50px;top:527.51px;font-size:9px;line-height:9px;color:#444;font-weight:normal;transform:translateX(-50%) scaleX(0.9);transform-origin:50% 0;">18%</div>
<div class="t" style="left:655.50px;top:527.51px;font-size:9px;line-height:9px;color:#444;font-weight:normal;transform:translateX(-50%) scaleX(0.9);transform-origin:50% 0;">189%</div>
<div class="r" style="left:33px;top:542px;width:88px;height:24px;background:#eef4fc;"></div>
<div class="r" style="left:33px;top:542px;width:660px;height:1px;background:#eceef1;"></div>
<div class="t" style="left:77.50px;top:550.61px;font-size:9px;line-height:9px;color:#444;font-weight:normal;transform:translateX(-50%) scaleX(0.9);transform-origin:50% 0;">WA</div>
<div class="t" style="right:448.00px;top:550.61px;font-size:9px;line-height:9px;color:#444;font-weight:normal;transform:scaleX(0.9);transform-origin:100% 0;">98,743</div>
<div class="t" style="right:306.00px;top:550.61px;font-size:9px;line-height:9px;color:#444;font-weight:normal;transform:scaleX(0.9);transform-origin:100% 0;">205,123</div>
<div class="t" style="left:477.40px;top:550.61px;font-size:9px;line-height:9px;color:#444;font-weight:normal;transform:translateX(-50%) scaleX(0.9);transform-origin:50% 0;">106,380</div>
<div class="t" style="left:582.50px;top:550.61px;font-size:9px;line-height:9px;color:#444;font-weight:normal;transform:translateX(-50%) scaleX(0.9);transform-origin:50% 0;">20%</div>
<div class="t" style="left:655.50px;top:550.61px;font-size:9px;line-height:9px;color:#444;font-weight:normal;transform:translateX(-50%) scaleX(0.9);transform-origin:50% 0;">208%</div>
<div class="r" style="left:120px;top:425px;width:289px;height:143px;border:1px solid #f20d0d;box-sizing:border-box"></div>
<div class="t" style="left:35.90px;top:582.57px;font-size:10.85px;line-height:10.85px;color:#111;font-weight:bold;">Monthly Performance by Branch</div>
<div class="t" style="right:17.60px;top:588.55px;font-size:8.4px;line-height:8.4px;color:#a6a6a6;font-weight:normal;">(Unit : USD)</div>
<div class="r" style="left:33px;top:604px;width:660px;height:2px;background:#8797b8;"></div>
<div class="r" style="left:33px;top:606px;width:88px;height:22px;background:#a3b3d0;"></div>
<div class="r" style="left:121px;top:606px;width:572px;height:22px;background:#eceff4;"></div>
<div class="r" style="left:121px;top:606px;width:1px;height:22px;background:#d8dde6;"></div>
<div class="r" style="left:216.6px;top:606px;width:1px;height:22px;background:#d8dde6;"></div>
<div class="r" style="left:305.7px;top:606px;width:1px;height:22px;background:#d8dde6;"></div>
<div class="r" style="left:406.5px;top:606px;width:1px;height:22px;background:#d8dde6;"></div>
<div class="r" style="left:499.3px;top:606px;width:1px;height:22px;background:#d8dde6;"></div>
<div class="r" style="left:593.6px;top:606px;width:1px;height:22px;background:#d8dde6;"></div>
<div class="t" style="left:77.80px;top:612.66px;font-size:8.8px;line-height:8.8px;color:#fff;font-weight:bold;transform:translateX(-50%) scaleX(0.9);transform-origin:50% 0;">Month</div>
<div class="t" style="left:169.70px;top:612.42px;font-size:9.3px;line-height:9.3px;color:#333;font-weight:bold;transform:translateX(-50%) scaleX(0.935);transform-origin:50% 0;">NYC</div>
<div class="t" style="left:261.20px;top:612.42px;font-size:9.3px;line-height:9.3px;color:#333;font-weight:bold;transform:translateX(-50%) scaleX(0.935);transform-origin:50% 0;">LA</div>
<div class="t" style="left:356.10px;top:612.42px;font-size:9.3px;line-height:9.3px;color:#333;font-weight:bold;transform:translateX(-50%) scaleX(0.935);transform-origin:50% 0;">SD</div>
<div class="t" style="left:453.00px;top:612.42px;font-size:9.3px;line-height:9.3px;color:#333;font-weight:bold;transform:translateX(-50%) scaleX(0.935);transform-origin:50% 0;">HOU</div>
<div class="t" style="left:546.50px;top:612.42px;font-size:9.3px;line-height:9.3px;color:#333;font-weight:bold;transform:translateX(-50%) scaleX(0.935);transform-origin:50% 0;">WA</div>
<div class="t" style="left:643.00px;top:612.42px;font-size:9.3px;line-height:9.3px;color:#333;font-weight:bold;transform:translateX(-50%) scaleX(0.935);transform-origin:50% 0;">Total</div>
</body></html>
